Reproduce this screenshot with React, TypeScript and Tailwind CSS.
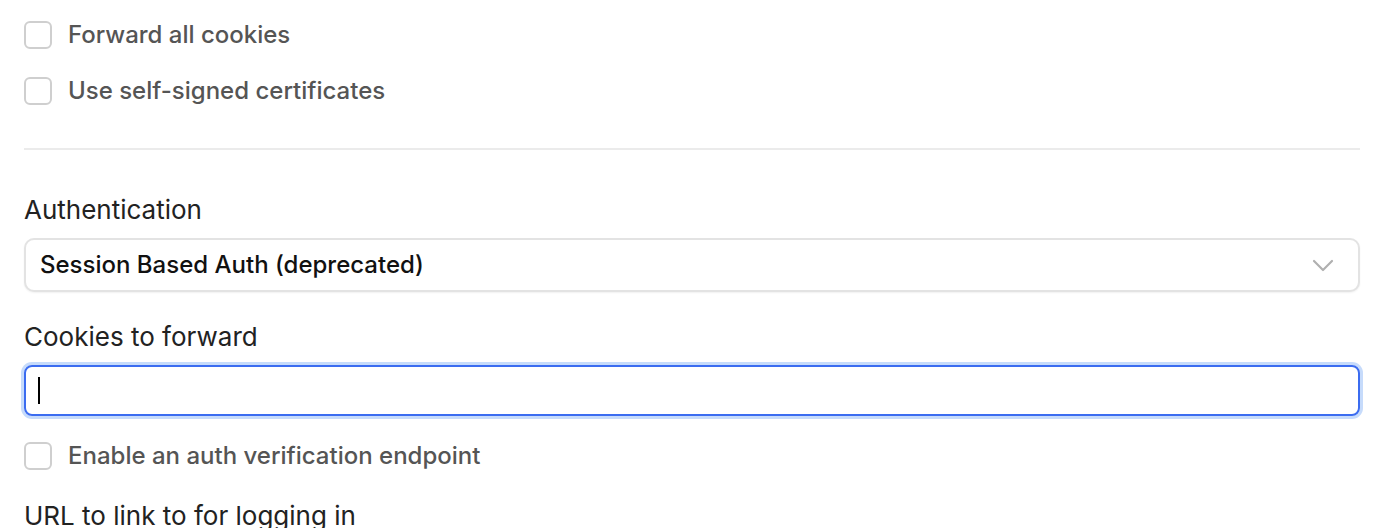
import React, { useState } from "react";

const Checkbox: React.FC<{ label: string }> = ({ label }) => {
  const [checked, setChecked] = useState(false);
  return (
    <label className="flex items-center h-7 cursor-pointer">
      <input
        type="checkbox"
        checked={checked}
        onChange={() => setChecked(!checked)}
        className="appearance-none w-7 h-7 rounded-[6px] border-2 border-[#cfcfcf] bg-white shrink-0"
      />
      <span className="ml-4 text-[24px] leading-7 font-medium text-[#555555]">{label}</span>
    </label>
  );
};

const App: React.FC = () => {
  return (
    <div
      className="w-[1396px] h-[528px] overflow-hidden bg-white pl-6 pr-9 pt-[21px]"
      style={{ fontFamily: "Inter, 'Noto Sans', sans-serif" }}
    >
      <Checkbox label="Forward all cookies" />
      <div className="mt-7">
        <Checkbox label="Use self-signed certificates" />
      </div>

      <div className="mt-[43px] h-[2px] bg-[#ebebeb]" />

      <p className="mt-[45px] text-[26px] leading-[30px] text-[#222222]">Authentication</p>
      <button className="mt-[13px] w-full h-[54px] flex items-center justify-between pl-[14px] pr-6 rounded-[10px] border-2 border-[#e3e3e3] bg-white shadow-[0_1px_2px_rgba(0,0,0,0.06)]">
        <span className="text-[24px] font-medium text-[#111111]">Session Based Auth (deprecated)</span>
        <svg width="22" height="14" viewBox="0 0 22 14" fill="none">
          <path d="M2 3l9 9 9-9" stroke="#b0b0b0" strokeWidth="2.2" strokeLinecap="round" strokeLinejoin="round" />
        </svg>
      </button>

      <p className="mt-[30px] text-[26px] leading-[30px] text-[#222222]">Cookies to forward</p>
      <div className="mt-[13px] w-full h-[51px] rounded-[8px] border-2 border-[#3b6cf0] ring-[3px] ring-[#c6dbfb] flex items-center px-3">
        <span className="w-[2px] h-[27px] bg-black" />
      </div>

      <div className="mt-[26px]">
        <Checkbox label="Enable an auth verification endpoint" />
      </div>

      <p className="mt-[31px] text-[26px] leading-[30px] text-[#222222]">URL to link to for logging in</p>
    </div>
  );
};

export default App;
